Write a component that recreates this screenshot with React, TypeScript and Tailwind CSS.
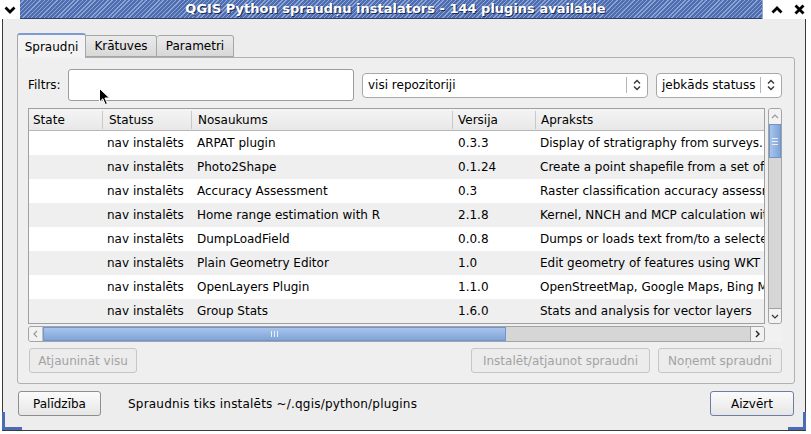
import React from 'react';

const rows: [string, string, string][] = [
  ['ARPAT plugin', '0.3.3', 'Display of stratigraphy from surveys.'],
  ['Photo2Shape', '0.1.24', 'Create a point shapefile from a set of geotagged images'],
  ['Accuracy Assessment', '0.3', 'Raster classification accuracy assessment'],
  ['Home range estimation with R', '2.1.8', 'Kernel, NNCH and MCP calculation with R'],
  ['DumpLoadField', '0.0.8', 'Dumps or loads text from/to a selected field'],
  ['Plain Geometry Editor', '1.0', 'Edit geometry of features using WKT'],
  ['OpenLayers Plugin', '1.1.0', 'OpenStreetMap, Google Maps, Bing Maps layers'],
  ['Group Stats', '1.6.0', 'Stats and analysis for vector layers'],
];

const UpDown = () => (
  <svg width="8" height="12" viewBox="0 0 8 12">
    <path d="M1 4.5 L4 1.5 L7 4.5 M1 7.5 L4 10.5 L7 7.5" fill="none" stroke="#333" strokeWidth="1.3" />
  </svg>
);

const Combo = ({ label, width }: { label: string; width: string }) => (
  <div className={`${width} h-[25px] flex items-center bg-white border border-[#a8a8a8] rounded-[4px] shrink-0`}>
    <span className="flex-1 pl-[5px] truncate">{label}</span>
    <span className="w-px h-[16px] bg-[#b4b4b4]" />
    <span className="w-[20px] flex justify-center">
      <UpDown />
    </span>
  </div>
);

const Btn = ({ label, width, disabled, primary }: { label: string; width: string; disabled?: boolean; primary?: boolean }) => (
  <div
    className={`${width} h-[25px] flex items-center justify-center rounded-[3px] border shrink-0 ${
      disabled
        ? 'border-[#c6c6c6] text-[#a3a3a3] bg-[#ececec]'
        : primary
        ? 'border-[#6c7fa3] bg-[linear-gradient(#fbfbfb,#e6e6e6)]'
        : 'border-[#8e8e8e] bg-[linear-gradient(#fbfbfb,#e6e6e6)]'
    }`}
  >
    {label}
  </div>
);

export default function App() {
  return (
    <div className="w-[811px] h-[434px] bg-white relative overflow-hidden text-[12px] text-black font-['DejaVu_Sans',sans-serif]">
      {/* title bar */}
      <div className="h-[19px] flex">
        <div className="w-[20px] bg-white flex items-center justify-center">
          <svg width="12" height="8" viewBox="0 0 12 8">
            <path d="M1.5 1.5 L6 6 L10.5 1.5" fill="none" stroke="#000" strokeWidth="2.8" />
          </svg>
        </div>
        <div className="flex-1 flex items-center justify-center border-b border-[#2c3d6e] bg-[repeating-linear-gradient(135deg,#4f6eb0_0px,#4f6eb0_2px,#8ea4d6_2px,#8ea4d6_3px)]">
          <span className="text-white font-bold text-[13px] [text-shadow:1px_1px_0_#1d2a4f] pl-[9px]">
            QGIS Python spraudņu instalators - 144 plugins available
          </span>
        </div>
        <div className="w-[49px] bg-white flex items-center justify-around pl-[2px] border-l border-[#9aa8c8]">
          <svg width="12" height="8" viewBox="0 0 12 8">
            <path d="M1.5 6.5 L6 2 L10.5 6.5" fill="none" stroke="#000" strokeWidth="2.8" />
          </svg>
          <svg width="11" height="11" viewBox="0 0 11 11">
            <path d="M1.5 1.5 L9.5 9.5 M9.5 1.5 L1.5 9.5" fill="none" stroke="#000" strokeWidth="2.8" />
          </svg>
        </div>
      </div>

      {/* window frame */}
      <div className="ml-[2px] w-[804px] h-[412px] bg-[#ededed] border-l border-r border-b border-[#3a3a3a] flex flex-col">
        <div className="pl-[14px] pt-[14px] flex items-end">
          <div className="w-[69px] h-[25px] -mb-px z-10 flex items-center justify-center bg-[#f3f3f3] border border-b-0 border-[#a6a6a6] border-t-2 border-t-[#7c9bd2] rounded-t-[3px]">
            Spraudņi
          </div>
          <div className="w-[71px] h-[22px] flex items-center justify-center bg-[linear-gradient(#ebebeb,#d8d8d8)] border border-l-0 border-[#a6a6a6] rounded-tr-[3px]">
            Krātuves
          </div>
          <div className="w-[77px] h-[22px] flex items-center justify-center bg-[linear-gradient(#ebebeb,#d8d8d8)] border border-l-0 border-[#a6a6a6] rounded-t-[3px]">
            Parametri
          </div>
        </div>

        {/* tab panel */}
        <div className="ml-[14px] w-[778px] h-[327px] bg-[#efefef] border border-[#b0b0b0] rounded-b-[3px] rounded-tr-[3px] flex flex-col pl-[10px] pr-[12px]">
          <div className="flex items-center mt-[11px] h-[32px]">
            <span className="w-[40px] shrink-0">Filtrs:</span>
            <div className="w-[286px] h-[32px] bg-white border border-[#9c9c9c] rounded-[3px] shrink-0" />
            <div className="w-[9px]" />
            <Combo label="visi repozitoriji" width="w-[286px]" />
            <div className="w-[9px]" />
            <Combo label="jebkāds statuss" width="w-[126px]" />
          </div>

          <div className="flex mt-[7px]">
            {/* table */}
            <div className="w-[738px] h-[216px] bg-white border border-[#a0a0a0] overflow-hidden">
              <div className="h-[22px] flex items-center bg-[linear-gradient(#f4f4f4,#e8e8e8)] border-b border-[#b8b8b8]">
                <div className="w-[73px] pl-[4px]">State</div>
                <div className="w-[89px] pl-[6px] border-l border-[#c8c8c8]">Statuss</div>
                <div className="w-[261px] pl-[6px] border-l border-[#c8c8c8]">Nosaukums</div>
                <div className="w-[83px] pl-[5px] border-l border-[#c8c8c8]">Versija</div>
                <div className="flex-1 pl-[5px] border-l border-[#c8c8c8]">Apraksts</div>
              </div>
              {rows.map((r, i) => (
                <div key={i} className={`h-[24px] flex items-center whitespace-nowrap ${i % 2 ? 'bg-[#efefef]' : 'bg-white'}`}>
                  <div className="w-[73px] shrink-0" />
                  <div className="w-[89px] shrink-0 pl-[5px] overflow-hidden">nav instalēts</div>
                  <div className="w-[261px] shrink-0 pl-[6px] overflow-hidden">{r[0]}</div>
                  <div className="w-[83px] shrink-0 pl-[6px] overflow-hidden">{r[1]}</div>
                  <div className="w-[230px] shrink-0 pl-[5px] overflow-hidden">{r[2]}</div>
                </div>
              ))}
            </div>
            <div className="w-[3px]" />
            {/* vertical scrollbar */}
            <div className="w-[14px] h-[216px] border border-[#a4a4a4] rounded-[3px] flex flex-col bg-[#d6d6d6] overflow-hidden">
              <div className="h-[15px] bg-[#f2f2f2] flex items-center justify-center">
                <svg width="8" height="5" viewBox="0 0 8 5">
                  <path d="M1 4 L4 1 L7 4" fill="none" stroke="#9a9a9a" strokeWidth="1.2" />
                </svg>
              </div>
              <div className="h-[34px] bg-[linear-gradient(90deg,#a9c4ea,#7ea4da)] border border-[#6f95cc] flex flex-col items-center justify-center gap-[2px]">
                <span className="w-[6px] h-px bg-[#e8f0fb]" />
                <span className="w-[6px] h-px bg-[#e8f0fb]" />
                <span className="w-[6px] h-px bg-[#e8f0fb]" />
              </div>
              <div className="flex-1" />
              <div className="h-[15px] bg-[#f2f2f2] border-t border-[#a4a4a4] flex items-center justify-center">
                <svg width="8" height="5" viewBox="0 0 8 5">
                  <path d="M1 1 L4 4 L7 1" fill="none" stroke="#333" strokeWidth="1.2" />
                </svg>
              </div>
            </div>
          </div>

          {/* horizontal scrollbar */}
          <div className="flex mt-[2px] h-[16px]">
            <div className="w-[738px] flex border border-[#a4a4a4] rounded-[3px] bg-[#d6d6d6] overflow-hidden">
              <div className="w-[14px] bg-[#f2f2f2] border-r border-[#c0c0c0] flex items-center justify-center">
                <svg width="5" height="8" viewBox="0 0 5 8">
                  <path d="M4 1 L1 4 L4 7" fill="none" stroke="#9a9a9a" strokeWidth="1.2" />
                </svg>
              </div>
              <div className="w-[463px] bg-[linear-gradient(#a9c4ea,#7ea4da)] border border-[#6f95cc] flex items-center justify-center gap-[2px]">
                <span className="w-px h-[6px] bg-[#e8f0fb]" />
                <span className="w-px h-[6px] bg-[#e8f0fb]" />
                <span className="w-px h-[6px] bg-[#e8f0fb]" />
              </div>
              <div className="flex-1" />
              <div className="w-[14px] bg-[#f2f2f2] border-l border-[#a4a4a4] flex items-center justify-center">
                <svg width="5" height="8" viewBox="0 0 5 8">
                  <path d="M1 1 L4 4 L1 7" fill="none" stroke="#222" strokeWidth="1.4" />
                </svg>
              </div>
            </div>
            <div className="w-[17px] bg-[#f1f1f1]" />
          </div>

          <div className="flex mt-[6px] pl-px">
            <Btn label="Atjaunināt visu" width="w-[108px]" disabled />
            <div className="flex-1" />
            <Btn label="Instalēt/atjaunot spraudni" width="w-[179px]" disabled />
            <div className="w-[8px]" />
            <Btn label="Noņemt spraudni" width="w-[124px]" disabled />
          </div>
        </div>

        {/* bottom row */}
        <div className="flex items-center mt-[7px] pl-[15px] pr-[11px]">
          <Btn label="Palīdzība" width="w-[83px]" />
          <span className="ml-[27px] tracking-[0.2px]">Spraudnis tiks instalēts ~/.qgis/python/plugins</span>
          <div className="flex-1" />
          <Btn label="Aizvērt" width="w-[84px]" primary />
        </div>
      </div>

      {/* frame corner handles */}
      <div className="absolute left-[2px] top-[412px] w-[3px] h-[18px] bg-[#4a6cb4]" />
      <div className="absolute left-[2px] top-[427px] w-[20px] h-[3px] bg-[#4a6cb4]" />
      <div className="absolute left-[803px] top-[412px] w-[3px] h-[18px] bg-[#4a6cb4]" />
      <div className="absolute left-[788px] top-[427px] w-[18px] h-[3px] bg-[#4a6cb4]" />

      {/* mouse pointer */}
      <svg className="absolute left-[99px] top-[88px]" width="12" height="18" viewBox="0 0 12 18">
        <path d="M0.5 0.5 L0.5 14 L3.8 10.8 L6.3 16.5 L8.4 15.6 L5.9 10 L10.5 10 Z" fill="#000" stroke="#fff" strokeWidth="1" />
      </svg>
    </div>
  );
}
